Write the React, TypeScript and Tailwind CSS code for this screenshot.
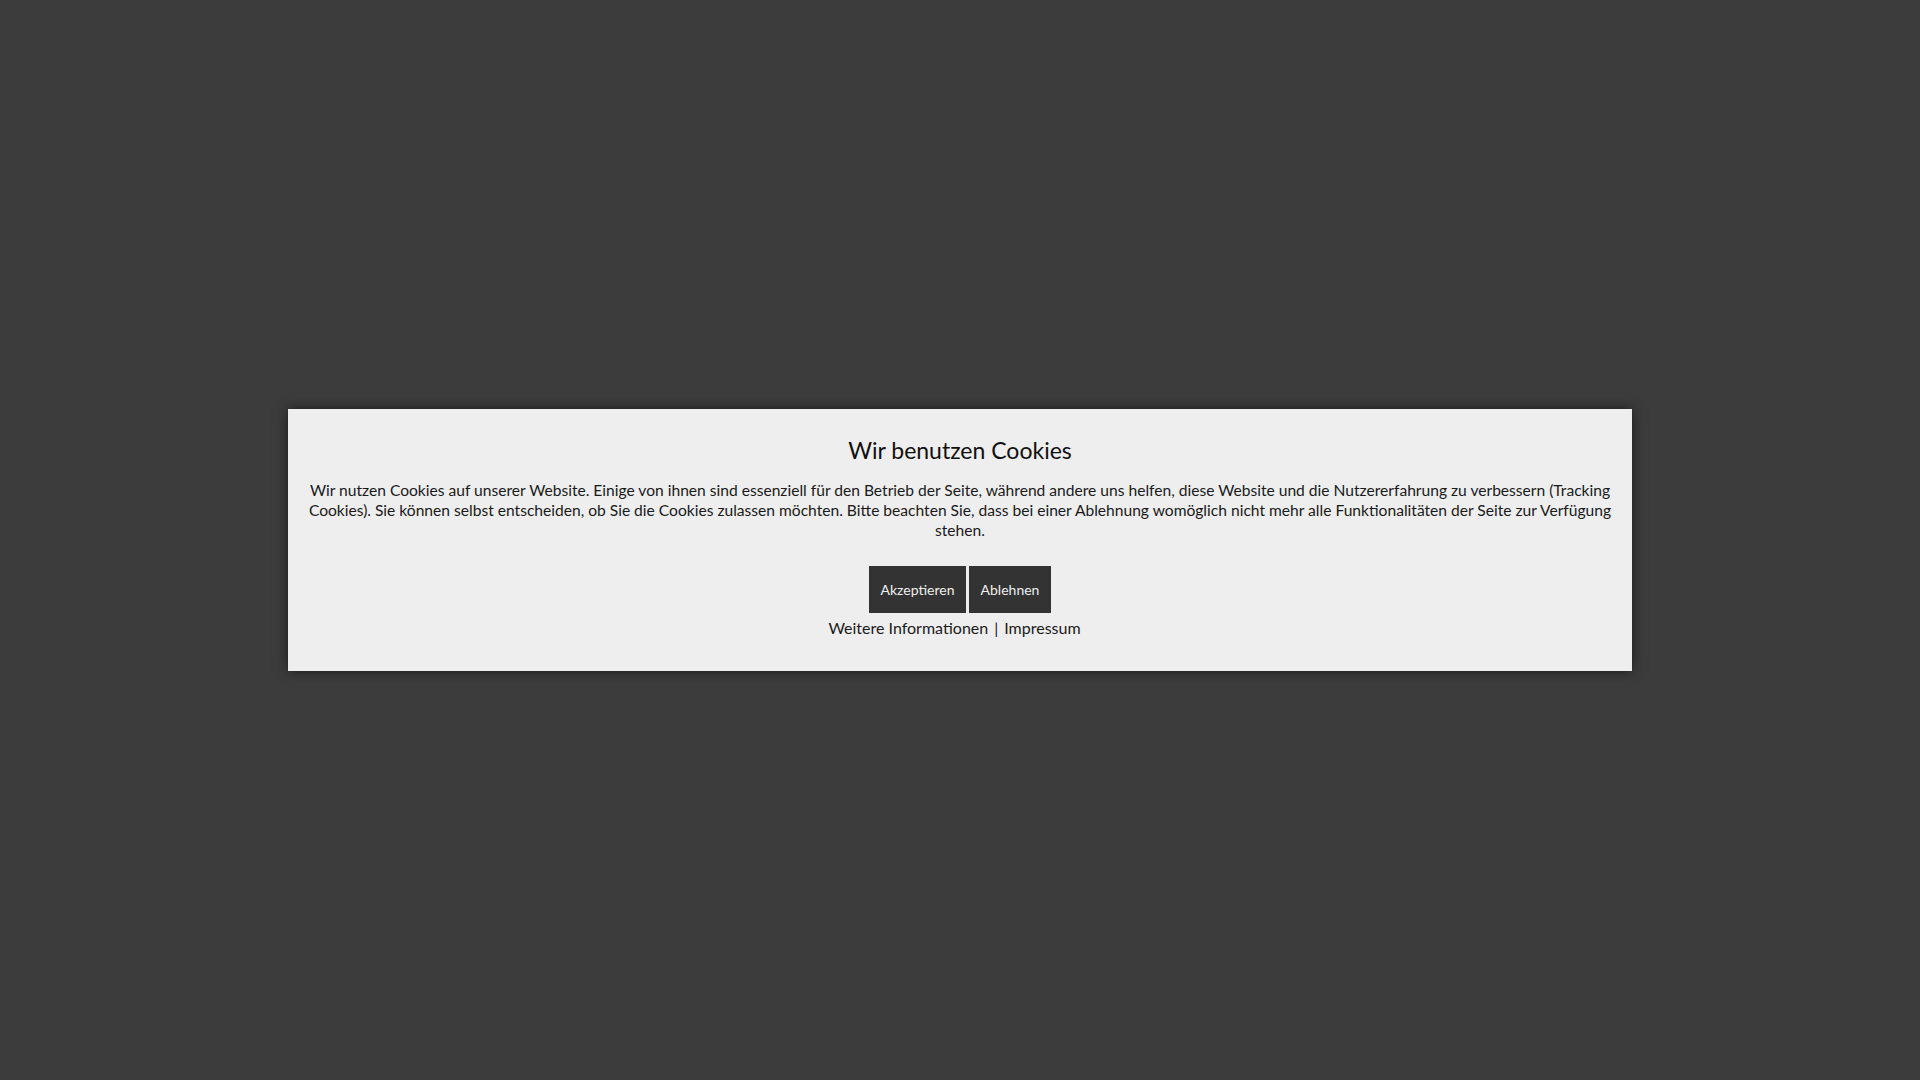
import React from "react";

export default function App() {
  return (
    <div
      className="w-full h-[1080px] bg-[#3c3c3c] flex items-center justify-center"
      style={{ fontFamily: "Lato, 'Open Sans', sans-serif" }}
    >
      <div className="w-[1344px] h-[262px] bg-[#eeeeee] shadow-[0_0_12px_rgba(0,0,0,0.55)] px-[20px] pt-[23px] text-center text-[#111]">
        <h2 className="text-[23px] leading-[36px] font-normal">Wir benutzen Cookies</h2>
        <p className="mt-[12px] text-[15.6px] leading-[20px] text-[#1a1a1a]">
          Wir nutzen Cookies auf unserer Website. Einige von ihnen sind essenziell für den Betrieb der Seite, während andere uns helfen, diese Website und die Nutzererfahrung zu verbessern (Tracking Cookies). Sie können selbst entscheiden, ob Sie die Cookies zulassen möchten. Bitte beachten Sie, dass bei einer Ablehnung womöglich nicht mehr alle Funktionalitäten der Seite zur Verfügung stehen.
        </p>
        <div className="mt-[26px] flex justify-center gap-[3px]">
          <button className="h-[47px] w-[97px] bg-[#333333] text-[#eeeeee] text-[14px]">Akzeptieren</button>
          <button className="h-[47px] w-[82px] bg-[#333333] text-[#eeeeee] text-[14px]">Ablehnen</button>
        </div>
        <div className="mt-[5px] pr-[11px] text-[16px] leading-[20px] text-[#1a1a1a]">
          <a>Weitere Informationen</a>
          <span className="mx-[6px]">|</span>
          <a>Impressum</a>
        </div>
      </div>
    </div>
  );
}
